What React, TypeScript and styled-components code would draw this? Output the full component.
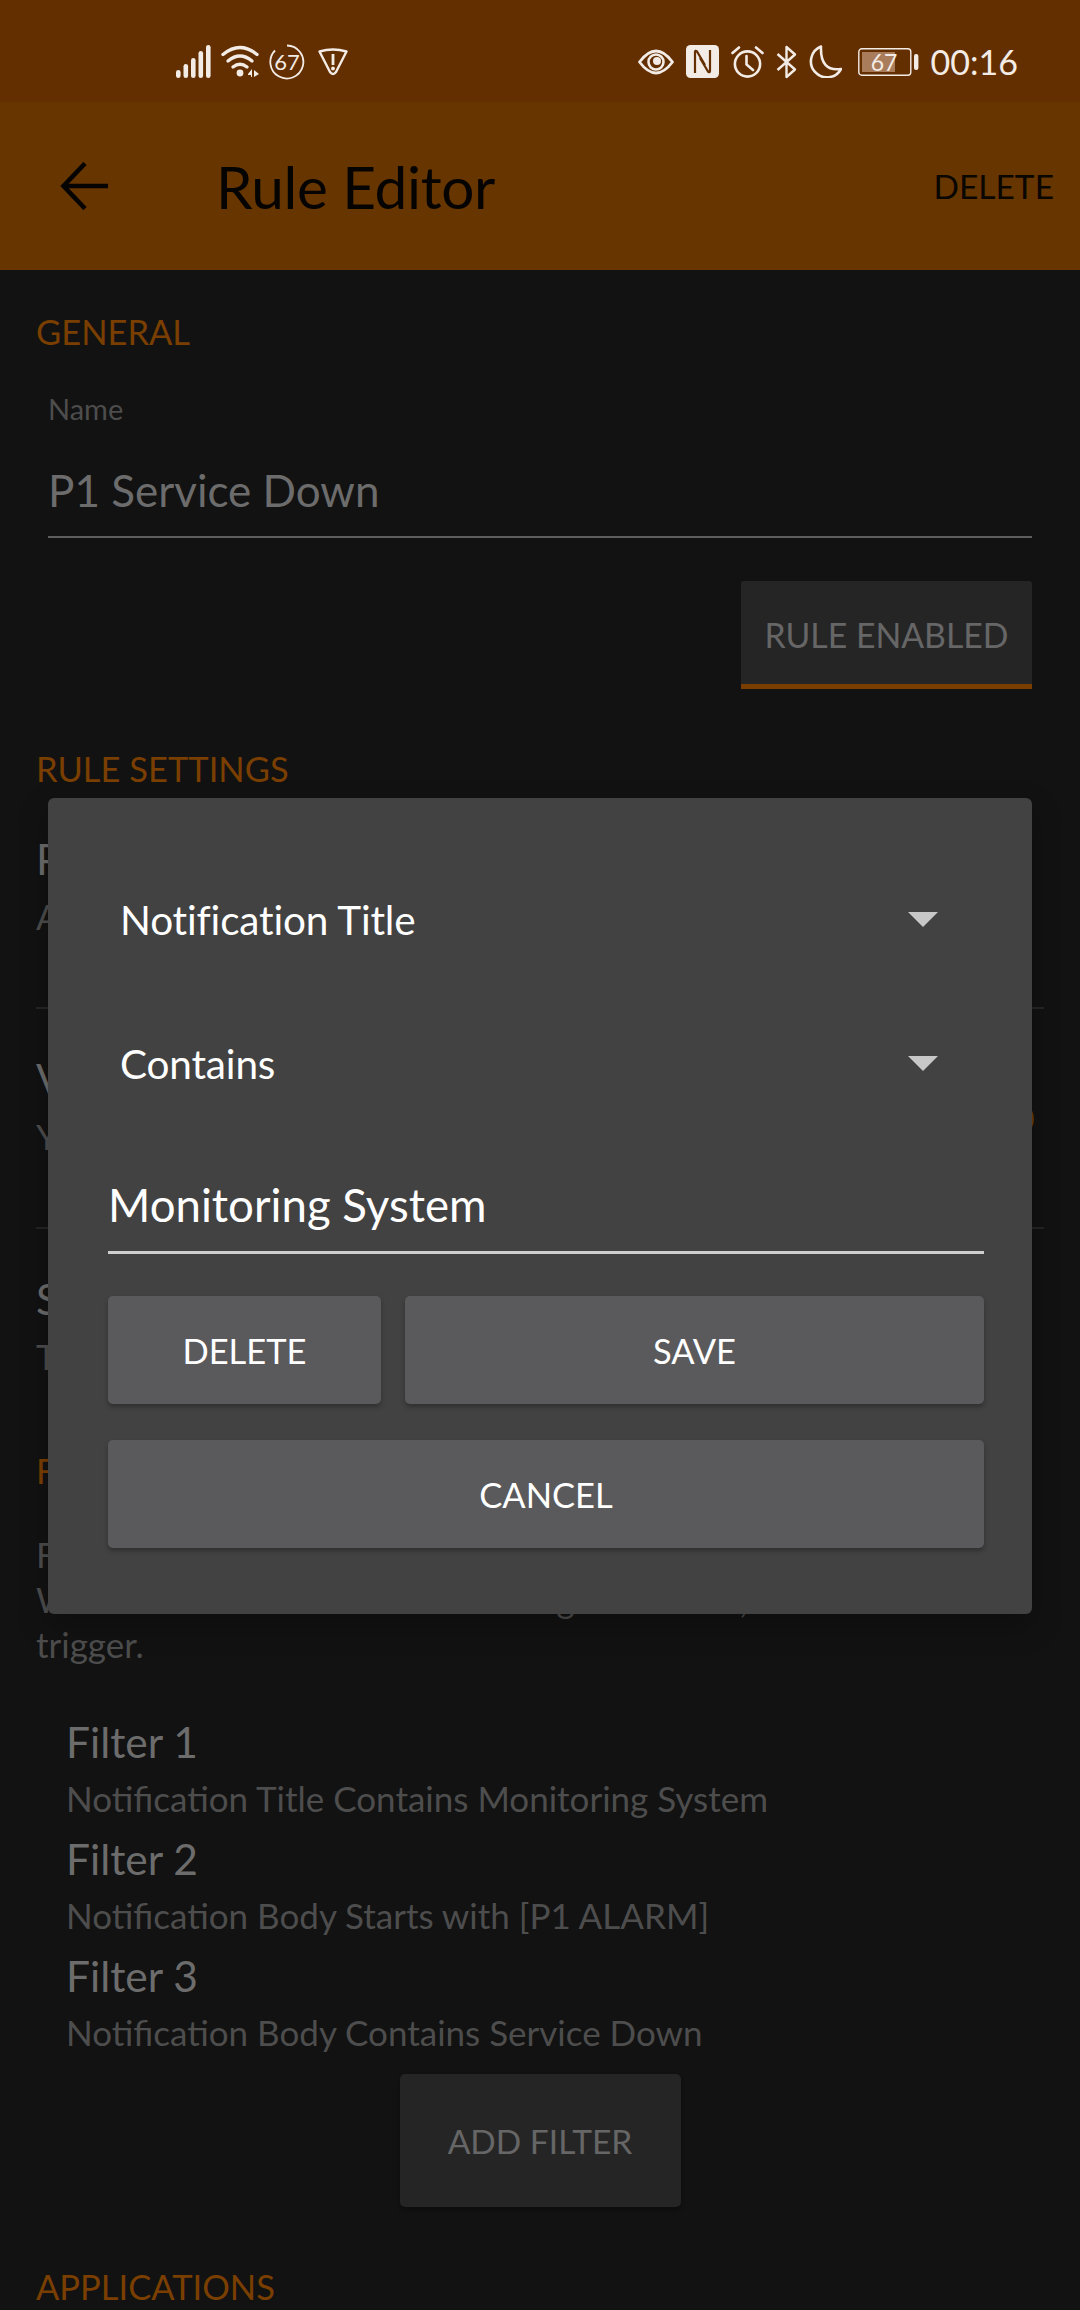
import React from "react";
import styled, { createGlobalStyle } from "styled-components";

const Global = createGlobalStyle`
  html, body { margin: 0; padding: 0; background: #121212; }
  body { width: 1080px; height: 2310px; overflow: hidden; font-family: "Lato", "Noto Sans", sans-serif; }
  #root { width: 1080px; height: 2310px; }
`;

const Screen = styled.div`
  position: relative;
  width: 1080px;
  height: 2310px;
  overflow: hidden;
  background: #121212;
`;
const StatusBar = styled.div`
  height: 102px;
  background: #632f00;
  display: flex;
  align-items: center;
  justify-content: space-between;
  padding: 0 62px 0 176px;
  box-sizing: border-box;
  color: #f3ebe5;
`;
const StatusGroup = styled.div`
  display: flex;
  align-items: center;
  padding-top: 21px;
`;
const Clock = styled.span`
  font-size: 34px;
  line-height: 36px;
  margin-left: 12px;
  font-family: "Lato", sans-serif;
`;
const AppBar = styled.header`
  height: 168px;
  background: #663500;
  display: flex;
  align-items: center;
  box-sizing: border-box;
  padding: 0 26px 0 60px;
`;
const BackIcon = styled.svg`
  width: 48px;
  height: 48px;
  margin-right: 108px;
`;
const AppTitle = styled.h1`
  flex: 1;
  margin: 0;
  font-size: 58.5px;
  font-weight: 400;
  color: #060402;
  letter-spacing: -0.3px;
`;
const AppAction = styled.span`
  font-size: 33.5px;
  color: #0a0602;
`;
const Content = styled.main`
  padding: 0 48px 0 36px;
`;
const SectionTitle = styled.h2<{ $top: number }>`
  margin: ${(p) => p.$top}px 0 0;
  font-size: 34.5px;
  line-height: 40px;
  font-weight: 400;
  color: #7a3f00;
`;
const Field = styled.div`
  margin: 39px 0 0 12px;
  border-bottom: 2px solid #5e5e5e;
  height: 147px;
  box-sizing: border-box;
`;
const FieldLabel = styled.div`
  font-size: 29px;
  line-height: 36px;
  color: #4d4d4d;
`;
const FieldValue = styled.div`
  margin-top: 38px;
  font-size: 44px;
  line-height: 50px;
  color: #6c6c6c;
`;
const ToggleRow = styled.div`
  display: flex;
  justify-content: flex-end;
  margin-top: 43px;
`;
const ToggleButton = styled.div`
  width: 291px;
  height: 108px;
  box-sizing: border-box;
  padding-top: 5px;
  background: #252526;
  border-bottom: 5px solid #7a3f00;
  border-radius: 3px 3px 0 0;
  display: flex;
  align-items: center;
  justify-content: center;
  font-size: 33.8px;
  color: #666;
`;
const SettingRow = styled.div<{ $h: number; $line: boolean }>`
  position: relative;
  height: ${(p) => p.$h}px;
  margin-right: -12px;
  box-sizing: border-box;
  padding-top: 42px;
  border-bottom: ${(p) => (p.$line ? "2px solid #252525" : "none")};
`;
const SettingTitle = styled.div`
  font-size: 42.5px;
  line-height: 56px;
  color: #6c6c6c;
`;
const SettingSub = styled.div`
  margin-top: 7px;
  font-size: 35px;
  line-height: 44px;
  color: #4d4d4d;
`;
const Knob = styled.span`
  position: absolute;
  right: 10px;
  top: 92px;
  width: 36px;
  height: 36px;
  border-radius: 50%;
  background: #6a3800;
`;
const Para = styled.p`
  margin: 41px 0 0;
  font-size: 35px;
  line-height: 45px;
  color: #4d4d4d;
`;
const FilterList = styled.div`
  margin: 47px 0 0 30px;
  height: 360px;
`;
const FilterName = styled.div`
  font-size: 42.5px;
  line-height: 56px;
  color: #6c6c6c;
`;
const FilterText = styled.div`
  font-size: 35px;
  line-height: 42px;
  margin: 7px 0 12px;
  color: #4d4d4d;
`;
const AddRow = styled.div`
  display: flex;
  justify-content: center;
  margin-left: 12px;
`;
const AddButton = styled.div`
  width: 281px;
  height: 133px;
  background: #252526;
  border-radius: 5px;
  display: flex;
  align-items: center;
  justify-content: center;
  font-size: 33.5px;
  color: #666;
  box-shadow: 0 3px 4px rgba(0, 0, 0, 0.3);
`;
const Dialog = styled.section`
  position: absolute;
  left: 48px;
  top: 798px;
  width: 984px;
  height: 816px;
  box-sizing: border-box;
  padding: 0 48px 0 60px;
  background: #424242;
  border-radius: 6px;
  box-shadow: 0 12px 30px rgba(0, 0, 0, 0.25);
  display: flex;
  flex-direction: column;
`;
const Select = styled.div`
  height: 144px;
  margin-right: 46px;
  margin-left: 12px;
  display: flex;
  align-items: center;
  justify-content: space-between;
  font-size: 40.5px;
  letter-spacing: -0.15px;
  color: #fff;
`;
const Caret = styled.span`
  width: 0;
  height: 0;
  border-left: 15px solid transparent;
  border-right: 15px solid transparent;
  border-top: 15px solid #c8c8c8;
`;
const TextField = styled.div`
  margin-top: 41px;
  height: 78px;
  box-sizing: border-box;
  border-bottom: 3px solid #cfcfcf;
  font-size: 45.6px;
  line-height: 58px;
  color: #fff;
`;
const ButtonRow = styled.div`
  display: flex;
  gap: 24px;
  margin-top: 42px;
`;
const DialogButton = styled.div<{ $w?: number }>`
  flex: ${(p) => (p.$w ? `0 0 ${p.$w}px` : "1")};
  height: 108px;
  background: #5a5a5c;
  border-radius: 5px;
  display: flex;
  align-items: center;
  justify-content: center;
  font-size: 34.5px;
  color: #fff;
  box-shadow: 0 3px 5px rgba(0, 0, 0, 0.28);
`;
const Icon = styled.svg<{ $gap?: number }>`
  display: block;
  flex: none;
  margin-right: ${(p) => p.$gap ?? 0}px;
`;
const DialogRows = styled.div`
  padding-top: 49px;
`;
const CancelRow = styled(ButtonRow)`
  margin-top: 36px;
`;

const Ic = "#f3ebe5";

export default function App() {
  return (
    <Screen>
      <Global />
      <StatusBar>
        <StatusGroup>
          <Icon $gap={10} width="35" height="33" viewBox="0 0 35 33">
            <g fill={Ic}>
              <rect x="0" y="25" width="4.6" height="8" rx="2.3" />
              <rect x="7.5" y="19" width="4.6" height="14" rx="2.3" />
              <rect x="15" y="13" width="4.6" height="20" rx="2.3" />
              <rect x="22.5" y="6" width="4.6" height="27" rx="2.3" />
              <rect x="30" y="0" width="4.6" height="33" rx="2.3" />
            </g>
          </Icon>
          <Icon $gap={9} width="39" height="33" viewBox="0 0 39 33">
            <g fill="none" stroke={Ic} strokeWidth="3.4" strokeLinecap="round">
              <path d="M2 9.5 Q19 -4.5 36 9.5" />
              <path d="M7 16 Q19 6 31 16" />
              <path d="M12 22 Q19 16.5 26 22" />
            </g>
            <circle cx="19" cy="28" r="3.4" fill={Ic} />
            <path d="M27 29 L31 24 V32 H30 V30 H27 Z M33 25 L38 29 L33 32 Z" fill={Ic} />
          </Icon>
          <Icon $gap={13} width="36" height="36" viewBox="0 0 36 36">
            <path d="M18 1.5 A16.5 16.5 0 1 1 6 6.5" fill="none" stroke={Ic} strokeWidth="1.8" />
            <text x="18" y="25.5" textAnchor="middle" fontSize="22" fontFamily="Lato" fill={Ic}>67</text>
          </Icon>
          <Icon width="30" height="28" viewBox="0 0 30 28">
            <path d="M1.5 3.5 Q15 -0.5 28.5 3.5 L18 24 Q15 28 12 24 Z" fill="none" stroke={Ic} strokeWidth="2.4" strokeLinejoin="round" />
            <rect x="13.6" y="6" width="2.8" height="11" fill={Ic} />
            <circle cx="15" cy="20.5" r="1.9" fill={Ic} />
          </Icon>
        </StatusGroup>
        <StatusGroup>
          <Icon $gap={12} width="36" height="26" viewBox="0 0 36 26">
            <path d="M1.5 13 Q18 -9 34.5 13 Q18 35 1.5 13 Z" fill="none" stroke={Ic} strokeWidth="2.8" strokeLinejoin="round" />
            <circle cx="18" cy="13" r="7.5" fill="none" stroke={Ic} strokeWidth="2.6" />
            <circle cx="19" cy="12" r="4" fill={Ic} />
          </Icon>
          <Icon $gap={12} width="33" height="33" viewBox="0 0 33 33">
            <rect width="33" height="33" rx="4.5" fill={Ic} />
            <path d="M9 28 V7 Q9 5 11 6.5 L19 20" fill="none" stroke="#632f00" strokeWidth="2.2" />
            <path d="M24 5 V26 Q24 28 22 26.5 L14 13" fill="none" stroke="#632f00" strokeWidth="2.2" />
          </Icon>
          <Icon $gap={12} width="33" height="33" viewBox="0 0 33 33">
            <circle cx="16.5" cy="19" r="12.6" fill="none" stroke={Ic} strokeWidth="2.6" />
            <path d="M15.5 11 V19.5 L22 25 M1.5 8 L8 2.5 M31.5 8 L25 2.5" fill="none" stroke={Ic} strokeWidth="2.6" strokeLinecap="round" />
          </Icon>
          <Icon $gap={12} width="21" height="34" viewBox="0 0 21 34">
            <path d="M1.5 9 L19 24.5 L10.5 32 V2 L19 9.5 L1.5 25" fill="none" stroke={Ic} strokeWidth="2.4" strokeLinejoin="round" />
          </Icon>
          <Icon $gap={16} width="33" height="33" viewBox="0 0 33 33">
            <path d="M12 1.5 A16 16 0 1 0 32 24 Q11 27 12 1.5 Z" fill="none" stroke={Ic} strokeWidth="2.6" strokeLinejoin="round" />
          </Icon>
          <Icon width="61" height="28" viewBox="0 0 61 28">
            <rect x="0.8" y="0.8" width="52" height="26.4" rx="3" fill="none" stroke={Ic} strokeWidth="1.4" />
            <rect x="4" y="4" width="33" height="20" fill="#a97d5c" />
            <text x="26" y="23" textAnchor="middle" fontSize="23" fontFamily="Lato" fill={Ic}>67</text>
            <rect x="56" y="6" width="4.4" height="16" rx="2" fill={Ic} />
          </Icon>
          <Clock>00:16</Clock>
        </StatusGroup>
      </StatusBar>
      <AppBar>
        <BackIcon viewBox="0 0 48 48">
          <path d="M48 24 H5 M25 1.5 L3.5 24 L25 46.5" fill="none" stroke="#060402" strokeWidth="4.6" />
        </BackIcon>
        <AppTitle>Rule Editor</AppTitle>
        <AppAction>DELETE</AppAction>
      </AppBar>
      <Content>
        <SectionTitle $top={42}>GENERAL</SectionTitle>
        <Field>
          <FieldLabel>Name</FieldLabel>
          <FieldValue>P1 Service Down</FieldValue>
        </Field>
        <ToggleRow>
          <ToggleButton>RULE ENABLED</ToggleButton>
        </ToggleRow>
        <SectionTitle $top={60}>RULE SETTINGS</SectionTitle>
        <SettingRow $h={220} $line>
          <SettingTitle>Priority</SettingTitle>
          <SettingSub>A</SettingSub>
        </SettingRow>
        <SettingRow $h={220} $line>
          <SettingTitle>Vibrate</SettingTitle>
          <SettingSub>Yes</SettingSub>
          <Knob />
        </SettingRow>
        <SettingRow $h={202} $line={false}>
          <SettingTitle>Sound</SettingTitle>
          <SettingSub>The</SettingSub>
        </SettingRow>
        <SectionTitle $top={20}>FILTERS</SectionTitle>
        <Para>
          Filters decide which notifications match this rule.
          <br />
          When all of the filters are matching all at once, this will
          <br />
          trigger.
        </Para>
        <FilterList>
          <FilterName>Filter 1</FilterName>
          <FilterText>Notification Title Contains Monitoring System</FilterText>
          <FilterName>Filter 2</FilterName>
          <FilterText>Notification Body Starts with [P1 ALARM]</FilterText>
          <FilterName>Filter 3</FilterName>
          <FilterText>Notification Body Contains Service Down</FilterText>
        </FilterList>
        <AddRow>
          <AddButton>ADD FILTER</AddButton>
        </AddRow>
        <SectionTitle $top={60}>APPLICATIONS</SectionTitle>
      </Content>
      <Dialog>
        <DialogRows>
          <Select>
            Notification Title
            <Caret />
          </Select>
          <Select>
            Contains
            <Caret />
          </Select>
        </DialogRows>
        <TextField>Monitoring System</TextField>
        <ButtonRow>
          <DialogButton $w={273}>DELETE</DialogButton>
          <DialogButton>SAVE</DialogButton>
        </ButtonRow>
        <CancelRow>
          <DialogButton>CANCEL</DialogButton>
        </CancelRow>
      </Dialog>
    </Screen>
  );
}
